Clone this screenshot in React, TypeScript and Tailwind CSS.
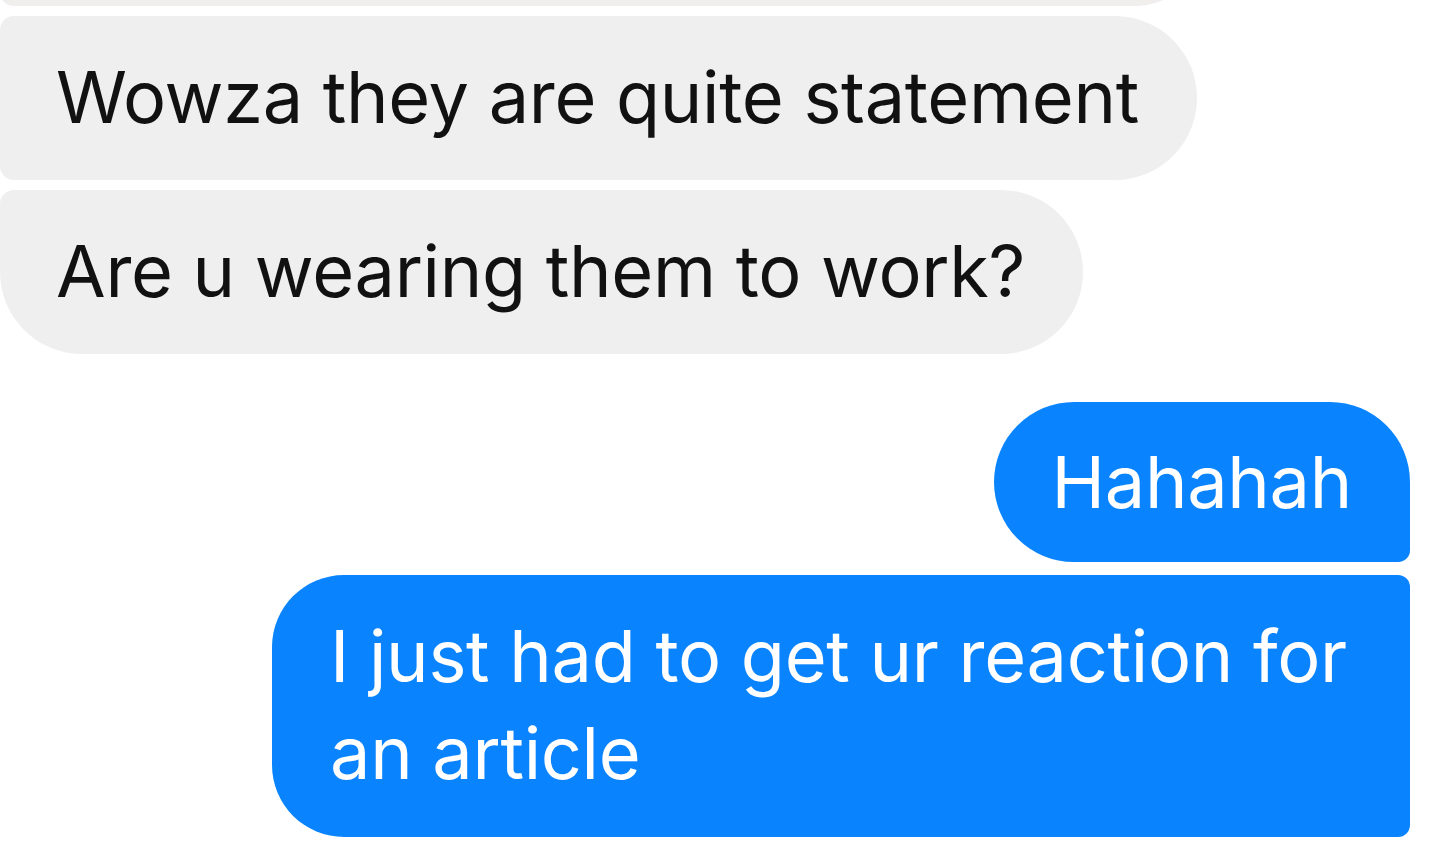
const messages = [
  { id: 1, from: "them", text: "Wowza they are quite statement", shape: "rounded-tl-[14px] rounded-bl-[14px] rounded-r-[82px]" },
  { id: 2, from: "them", text: "Are u wearing them to work?", shape: "rounded-tl-[14px] rounded-bl-[82px] rounded-r-[82px]" },
]

export default function App() {
  return (
    <div className="h-[847px] w-[1440px] overflow-hidden bg-white font-['Inter','Helvetica_Neue',sans-serif]">
      <div className="flex flex-col">
        {/* tail of previous message, cut off at top */}
        <div className="mt-[-158px] h-[164px] w-[1215px] rounded-r-[82px] rounded-l-[14px] bg-[#f1eeee]" />

        {/* incoming */}
        <div className="mt-[10px] flex flex-col gap-[10px]">
          {messages.map((m) => (
            <div
              key={m.id}
              className={`self-start flex h-[164px] items-center bg-[#efefef] pl-[56px] pr-[58px] pb-[2px] text-[72px] tracking-[-0.3px] text-[#111] ${m.shape}`}
            >
              {m.text}
            </div>
          ))}
        </div>

        {/* outgoing */}
        <div className="mt-[48px] flex flex-col items-end gap-[13px] pr-[30px] text-white">
          <div className="flex h-[160px] items-center rounded-tl-[82px] rounded-tr-[82px] rounded-bl-[82px] rounded-br-[12px] bg-[#0a84fe] pl-[58px] pr-[58px] text-[72px] tracking-[-0.3px]">
            Hahahah
          </div>
          <div className="w-[1138px] rounded-tl-[72px] rounded-bl-[72px] rounded-r-[12px] bg-[#0a84fe] pb-[36px] pl-[58px] pr-[20px] pt-[32px] text-[72px] leading-[97px] tracking-[-0.3px]">
            I just had to get ur reaction for an article
          </div>
        </div>
      </div>
    </div>
  )
}
